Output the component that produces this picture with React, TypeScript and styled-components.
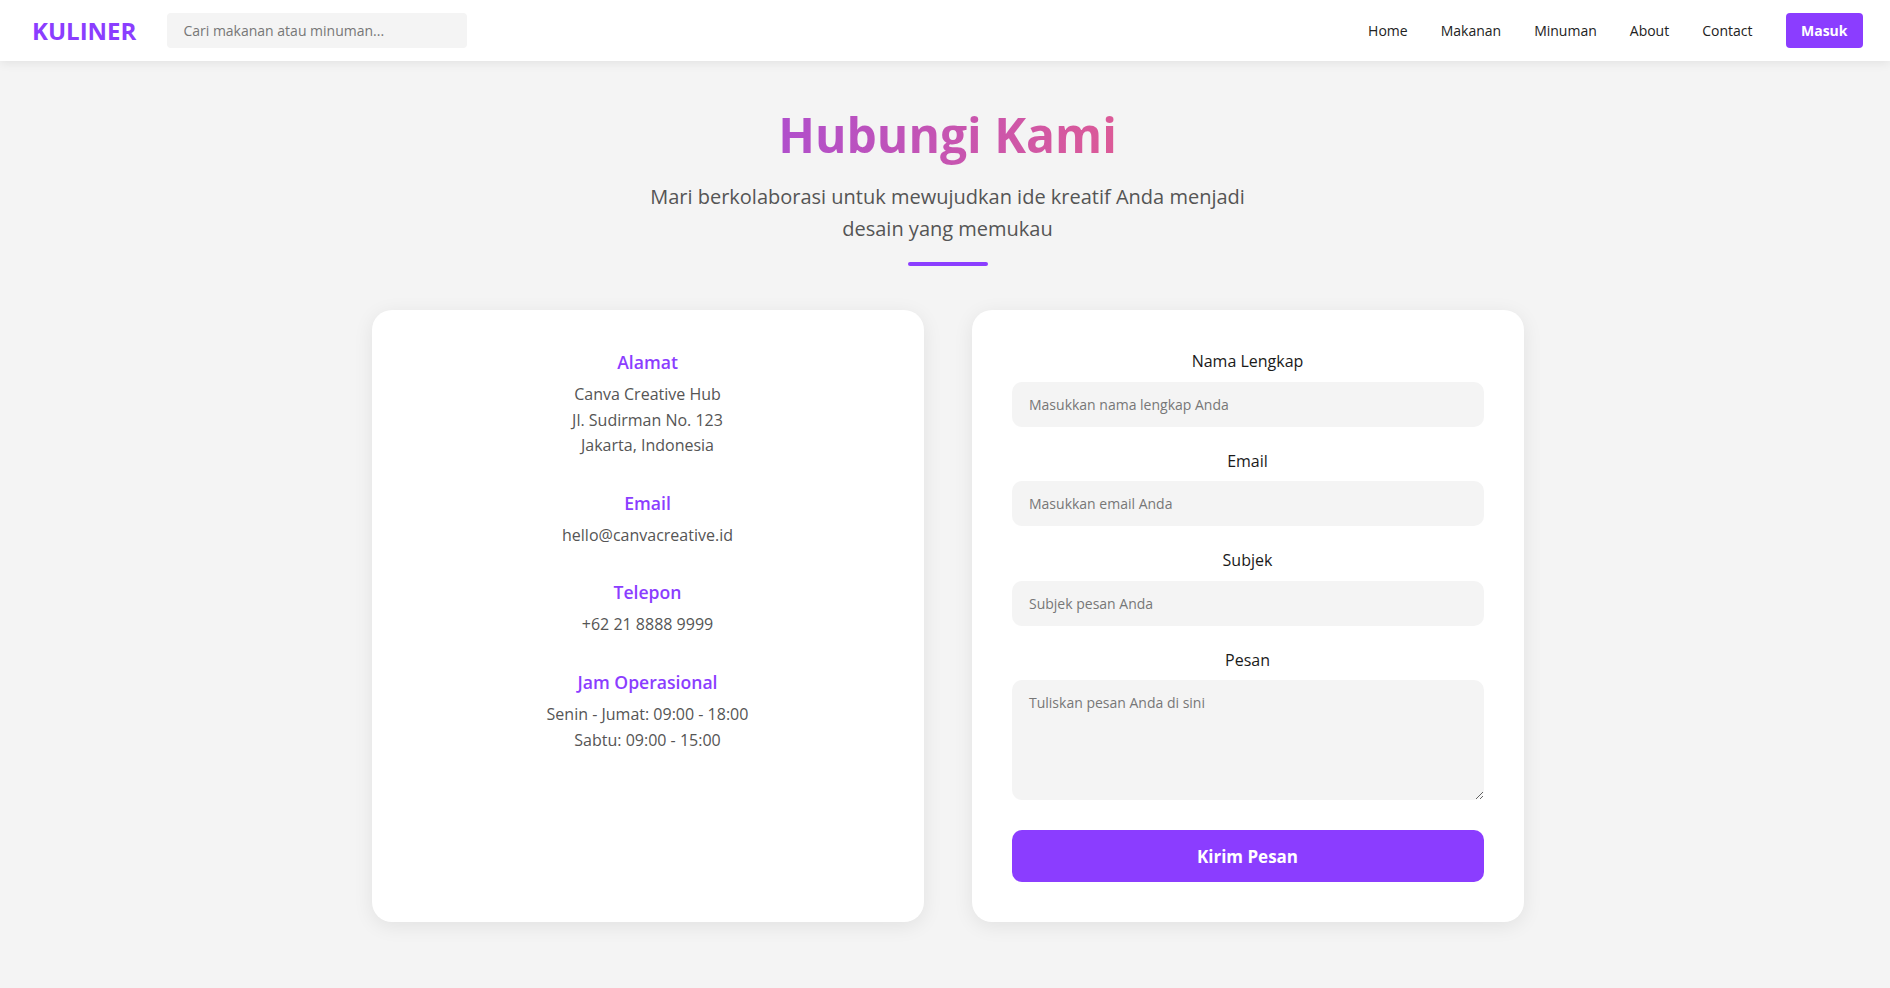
import React from "react";
import styled, { createGlobalStyle } from "styled-components";

const GlobalStyle = createGlobalStyle`
  * { box-sizing: border-box; }
  html, body { margin: 0; padding: 0; }
  body {
    background: #f4f4f4;
    font-family: "Open Sans", "Noto Sans", sans-serif;
    color: #222;
  }
`;

const purple = "#8b3dff";

const Navbar = styled.header`
  height: 61px;
  background: #fff;
  display: flex;
  align-items: center;
  justify-content: space-between;
  padding: 0 27px 0 32px;
  box-shadow: 0 2px 10px rgba(0, 0, 0, 0.08);
  position: relative;
  z-index: 2;
`;

const NavLeft = styled.div`
  display: flex;
  align-items: center;
  gap: 31px;
`;

const Logo = styled.div`
  font-size: 24px;
  font-weight: 700;
  color: ${purple};
`;

const Search = styled.input`
  width: 300px;
  height: 35px;
  border: none;
  border-radius: 4px;
  background: #f4f4f4;
  padding: 0 16px;
  font-family: inherit;
  font-size: 14px;
  outline: none;
  &::placeholder { color: #777; }
`;

const NavRight = styled.nav`
  display: flex;
  align-items: center;
  gap: 33px;
`;

const NavLink = styled.a`
  font-size: 14px;
  color: #222;
  text-decoration: none;
`;

const LoginButton = styled.button`
  background: ${purple};
  color: #fff;
  border: none;
  border-radius: 4px;
  padding: 8px 15.5px;
  font-family: inherit;
  font-size: 14px;
  font-weight: 700;
  line-height: 19px;
`;

const Main = styled.main`
  padding: 41px 0 60px 5px;
  display: flex;
  flex-direction: column;
  align-items: center;
`;

const Header = styled.section`
  display: flex;
  flex-direction: column;
  align-items: center;
  text-align: center;
  margin-bottom: 44px;
`;

const Title = styled.h1`
  margin: 0 0 14px;
  font-size: 48px;
  font-weight: 700;
  line-height: normal;
  background: linear-gradient(90deg, #b04fcc, #dc5a97);
  -webkit-background-clip: text;
  background-clip: text;
  color: transparent;
`;

const Subtitle = styled.p`
  margin: 0 0 17px;
  max-width: 600px;
  font-size: 20px;
  line-height: 32px;
  color: #555;
`;

const Divider = styled.div`
  width: 80px;
  height: 4px;
  border-radius: 2px;
  background: ${purple};
`;

const Grid = styled.div`
  width: 1152px;
  display: grid;
  grid-template-columns: 1fr 1fr;
  gap: 48px;
`;

const Card = styled.div`
  background: #fff;
  border-radius: 20px;
  padding: 40px;
  box-shadow: 0 4px 20px rgba(0, 0, 0, 0.08);
`;

const InfoItem = styled.div`
  text-align: center;
  & + & { margin-top: 32px; }
`;

const InfoTitle = styled.h3`
  margin: 0 0 8px;
  font-size: 17.6px;
  font-weight: 600;
  line-height: normal;
  color: ${purple};
`;

const InfoText = styled.p`
  margin: 0;
  font-size: 16px;
  line-height: 1.6;
  color: #555;
`;

const Field = styled.div`
  margin-bottom: 23px;
`;

const Label = styled.label`
  display: block;
  text-align: center;
  font-size: 16px;
  font-weight: 500;
  line-height: normal;
  color: #1a1a1a;
  margin-bottom: 9.6px;
`;

const Input = styled.input`
  display: block;
  width: 100%;
  border: none;
  border-radius: 10px;
  background: #f4f4f4;
  padding: 13px 17.5px;
  font-family: inherit;
  font-size: 14px;
  line-height: normal;
  outline: none;
  &::placeholder { color: #777; }
`;

const TextArea = styled.textarea`
  display: block;
  width: 100%;
  height: 120px;
  border: none;
  border-radius: 10px;
  background: #f4f4f4;
  padding: 13px 17.5px;
  font-family: inherit;
  font-size: 14px;
  line-height: normal;
  outline: none;
  resize: vertical;
  &::placeholder { color: #777; }
`;

const SubmitButton = styled.button`
  display: block;
  width: 100%;
  margin-top: 30px;
  border: none;
  border-radius: 10px;
  background: ${purple};
  color: #fff;
  height: 52px;
  padding: 0;
  font-family: inherit;
  font-size: 17px;
  font-weight: 700;
  line-height: normal;
`;

const info = [
  { title: "Alamat", lines: ["Canva Creative Hub", "Jl. Sudirman No. 123", "Jakarta, Indonesia"] },
  { title: "Email", lines: ["hello@canvacreative.id"] },
  { title: "Telepon", lines: ["+62 21 8888 9999"] },
  { title: "Jam Operasional", lines: ["Senin - Jumat: 09:00 - 18:00", "Sabtu: 09:00 - 15:00"] },
];

const fields = [
  { label: "Nama Lengkap", placeholder: "Masukkan nama lengkap Anda" },
  { label: "Email", placeholder: "Masukkan email Anda" },
  { label: "Subjek", placeholder: "Subjek pesan Anda" },
];

export default function App() {
  return (
    <>
      <GlobalStyle />
      <Navbar>
        <NavLeft>
          <Logo>KULINER</Logo>
          <Search placeholder="Cari makanan atau minuman..." />
        </NavLeft>
        <NavRight>
          {["Home", "Makanan", "Minuman", "About", "Contact"].map((l) => (
            <NavLink key={l} href="#">{l}</NavLink>
          ))}
          <LoginButton>Masuk</LoginButton>
        </NavRight>
      </Navbar>
      <Main>
        <Header>
          <Title>Hubungi Kami</Title>
          <Subtitle>
            Mari berkolaborasi untuk mewujudkan ide kreatif Anda menjadi desain yang memukau
          </Subtitle>
          <Divider />
        </Header>
        <Grid>
          <Card>
            {info.map((it) => (
              <InfoItem key={it.title}>
                <InfoTitle>{it.title}</InfoTitle>
                <InfoText>
                  {it.lines.map((ln, i) => (
                    <React.Fragment key={i}>
                      {ln}
                      {i < it.lines.length - 1 && <br />}
                    </React.Fragment>
                  ))}
                </InfoText>
              </InfoItem>
            ))}
          </Card>
          <Card>
            {fields.map((f) => (
              <Field key={f.label}>
                <Label>{f.label}</Label>
                <Input placeholder={f.placeholder} />
              </Field>
            ))}
            <Field>
              <Label>Pesan</Label>
              <TextArea placeholder="Tuliskan pesan Anda di sini" />
            </Field>
            <SubmitButton>Kirim Pesan</SubmitButton>
          </Card>
        </Grid>
      </Main>
    </>
  );
}
